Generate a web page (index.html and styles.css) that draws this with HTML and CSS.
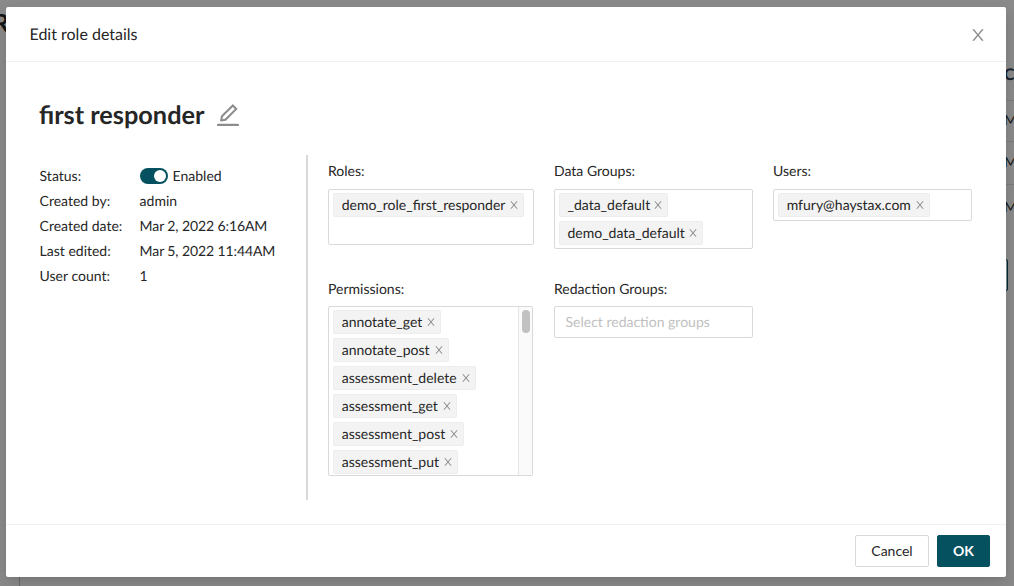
FILE: index.html
```html
<!DOCTYPE html>
<html lang="en">
<head>
<meta charset="utf-8">
<title>Edit role details</title>
<link rel="stylesheet" href="styles.css">
</head>
<body>
<svg class="defs" width="0" height="0" aria-hidden="true">
  <symbol id="close" viewBox="0 0 1024 1024"><path d="M563.8 512l262.5-312.9c4.4-5.2.7-13.1-6.1-13.1h-79.8c-4.7 0-9.2 2.1-12.3 5.7L511.6 449.8 295.1 191.7c-3-3.6-7.5-5.7-12.3-5.7H203c-6.8 0-10.5 7.9-6.1 13.1L459.4 512 196.9 824.9A7.95 7.95 0 00203 838h79.8c4.7 0 9.2-2.1 12.3-5.7l216.5-258.1 216.5 258.1c3 3.6 7.5 5.7 12.3 5.7h79.8c6.8 0 10.5-7.9 6.1-13.1L563.8 512z"/></symbol>
  <symbol id="edit" viewBox="0 0 1024 1024"><path d="M257.7 752c2 0 4-.2 6-.5L431.9 722c2-.4 3.9-1.3 5.3-2.8l423.9-423.9a9.96 9.96 0 000-14.1L694.9 114.9c-1.9-1.9-4.4-2.9-7.1-2.9s-5.2 1-7.1 2.9L256.8 538.8c-1.5 1.5-2.4 3.3-2.8 5.3l-29.5 168.2a33.5 33.5 0 009.4 29.8c6.6 6.4 14.9 9.9 23.8 9.9zm67.4-174.4L687.8 215l73.3 73.3-362.7 362.6-88.9 15.7 15.6-89zM880 836H144c-17.7 0-32 14.3-32 32v36c0 4.4 3.6 8 8 8h784c4.4 0 8-3.6 8-8v-36c0-17.7-14.3-32-32-32z"/></symbol>
</svg>

<div class="backdrop">
  <span class="under under-title">R</span>
  <span class="under under-head">C</span>
  <span class="under under-cell cell-1">M</span>
  <span class="under under-cell cell-2">M</span>
  <span class="under under-cell cell-3">M</span>
  <i class="under rule rule-1"></i>
  <i class="under rule rule-2"></i>
  <i class="under rule rule-3"></i>
  <i class="under under-button"></i>
  <i class="under under-line"></i>
</div>

<main class="modal">
  <header class="modal-header">
    <span>Edit role details</span>
    <svg class="modal-close"><use href="#close"/></svg>
  </header>

  <section class="modal-body">
    <div class="title-row">
      <h1 class="title">first responder</h1>
      <svg class="edit-icon"><use href="#edit"/></svg>
    </div>
    <div class="content">
      <dl class="details">
        <dt>Status:</dt><dd class="status"><span class="switch"></span>Enabled</dd>
        <dt>Created by:</dt><dd>admin</dd>
        <dt>Created date:</dt><dd class="date">Mar 2, 2022 6:16AM</dd>
        <dt>Last edited:</dt><dd class="date">Mar 5, 2022 11:44AM</dd>
        <dt>User count:</dt><dd>1</dd>
      </dl>
      <div class="fields">
        <div class="field">
          <label>Roles:</label>
          <div class="select select-roles">
            <span class="tag">demo_role_first_responder<svg><use href="#close"/></svg></span>
          </div>
        </div>
        <div class="field">
          <label>Data Groups:</label>
          <div class="select">
            <span class="tag tag-default">_data_default<svg><use href="#close"/></svg></span>
            <span class="tag tag-default">demo_data_default<svg><use href="#close"/></svg></span>
          </div>
        </div>
        <div class="field">
          <label>Users:</label>
          <div class="select">
            <span class="tag">mfury@haystax.com<svg><use href="#close"/></svg></span>
          </div>
        </div>
        <div class="field field-lower">
          <label>Permissions:</label>
          <div class="select select-permissions">
            <div class="tag-list">
              <span class="tag">annotate_get<svg><use href="#close"/></svg></span>
              <span class="tag">annotate_post<svg><use href="#close"/></svg></span>
              <span class="tag">assessment_delete<svg><use href="#close"/></svg></span>
              <span class="tag">assessment_get<svg><use href="#close"/></svg></span>
              <span class="tag">assessment_post<svg><use href="#close"/></svg></span>
              <span class="tag">assessment_put<svg><use href="#close"/></svg></span>
            </div>
            <div class="scrollbar"><div class="thumb"></div></div>
          </div>
        </div>
        <div class="field field-lower">
          <label>Redaction Groups:</label>
          <div class="select select-empty">Select redaction groups</div>
        </div>
      </div>
    </div>
  </section>

  <footer class="modal-footer">
    <button class="button">Cancel</button>
    <button class="button button-primary">OK</button>
  </footer>
</main>
</body>
</html>
```
FILE: styles.css
```css
* { box-sizing: border-box; }
body {
  margin: 0;
  width: 1014px;
  height: 586px;
  padding: 7px 8px 9px 6px;
  overflow: hidden;
  background: #8c8c8c;
  color: #262626;
  font: 14px/22px Lato, sans-serif;
  text-rendering: geometricPrecision;
}
.defs { position: absolute; }
svg { fill: currentColor; flex: none; }

/* page behind the dialog */
.backdrop { position: absolute; inset: 0; overflow: hidden; }
.under { position: absolute; }
.under-title { left: -7px; top: 11px; font-size: 25px; font-weight: 700; line-height: 24px; color: #151515; }
.under-head { left: 1004px; top: 64px; font-size: 16px; font-weight: 700; color: #17242e; }
.under-cell { left: 1004px; color: #151515; }
.cell-1 { top: 109px; }
.cell-2 { top: 151px; }
.cell-3 { top: 196px; }
.rule { left: 1000px; width: 14px; height: 1px; background: #7e7e7e; }
.rule-1 { top: 100px; }
.rule-2 { top: 141px; }
.rule-3 { top: 184px; }
.under-button { left: 980px; top: 259px; width: 28px; height: 32px; border: 1px solid #032d38; border-radius: 2px; }
.under-line { left: 19px; top: 560px; width: 1px; height: 26px; background: #6c6c6c; }

.modal {
  position: relative;
  display: flex;
  flex-direction: column;
  width: 1000px;
  height: 570px;
  background: #fff;
  border-radius: 2px;
  box-shadow: 0 3px 6px -4px rgba(0,0,0,.12), 0 6px 16px rgba(0,0,0,.08), 0 9px 28px 8px rgba(0,0,0,.05);
}
.modal-header {
  display: flex;
  align-items: center;
  justify-content: space-between;
  height: 55px;
  padding: 2px 19px 0 23.5px;
  border-bottom: 1px solid #f0f0f0;
  font-size: 16px;
}
.modal-close { width: 18px; height: 18px; color: #8c8c8c; }
.modal-body { flex: 1; padding: 32px 0 0 33px; }
.title-row { display: flex; align-items: flex-start; gap: 8.5px; height: 61px; }
.title { width: 166px; margin: 5px 0 0; font-size: 25.3px; line-height: 32px; font-weight: 700; white-space: nowrap; }
.edit-icon { width: 28px; height: 28px; margin-top: 7px; color: #8c8c8c; }

.content { display: flex; height: 345px; }
.details {
  display: grid;
  grid-template-columns: 100px 1fr;
  grid-auto-rows: 25px;
  align-content: start;
  width: 269px;
  margin: 0;
  padding: 8px 0 0 .6px;
  border-right: 2px solid #d9d9d9;
  line-height: 25px;
}
.details dd { margin: 0; }
.details .date { letter-spacing: -.1px; }
.status { display: flex; align-items: center; gap: 5px; }
.switch {
  display: flex;
  justify-content: flex-end;
  width: 28px;
  height: 16px;
  padding: 2px;
  border-radius: 8px;
  background: #055160;
}
.switch::after { content: ""; width: 12px; height: 12px; border-radius: 50%; background: #fff; }

.fields {
  display: grid;
  grid-template-columns: 206px 199px 199px;
  grid-template-rows: 118px 1fr;
  column-gap: 20px;
  padding: 5px 0 0 20px;
}
.field label { display: block; height: 29px; }
.field-lower label { height: 28px; }
.select {
  display: flex;
  flex-direction: column;
  align-items: flex-start;
  gap: 4px;
  padding: 3px 4px;
  border: 1px solid #d9d9d9;
  border-radius: 2px;
}
.select-roles { height: 56px; }
.tag {
  display: flex;
  align-items: center;
  gap: 3px;
  height: 24px;
  padding: 0 3px 0 7.7px;
  border: 1px solid #ededed;
  border-radius: 2px;
  background: #f3f3f3;
  font-variant-ligatures: common-ligatures;
}
.tag-default { padding-left: 7.5px; word-spacing: 0; gap: 2px; }
.tag svg { width: 12px; height: 12px; color: #8c8c8c; }
.select-permissions {
  flex-direction: row;
  justify-content: space-between;
  width: 205px;
  height: 170px;
  padding: 0;
  overflow: hidden;
}
.tag-list { display: flex; flex-direction: column; align-items: flex-start; gap: 4px; padding: 3px 4px; }
.scrollbar { width: 14px; height: 100%; padding: 3px 2px 0 3px; border-left: 1px solid #e6e6e6; background: #fafafa; }
.thumb { width: 8px; height: 23px; border-radius: 4px; background: #c1c1c1; }
.select-empty { height: 32px; padding: 4px 10.5px; color: #bfbfbf; }

.modal-footer {
  display: flex;
  justify-content: flex-end;
  gap: 8px;
  height: 53px;
  padding: 10px 16px;
  border-top: 1px solid #f0f0f0;
}
.button {
  width: 74px;
  height: 32px;
  padding: 0;
  border: 1px solid #d9d9d9;
  border-radius: 2px;
  background: #fff;
  color: #262626;
  font: 14px/22px Lato, sans-serif;
}
.button-primary { width: 53px; border-color: #055160; background: #055160; color: #fff; font-weight: 700; }
```
